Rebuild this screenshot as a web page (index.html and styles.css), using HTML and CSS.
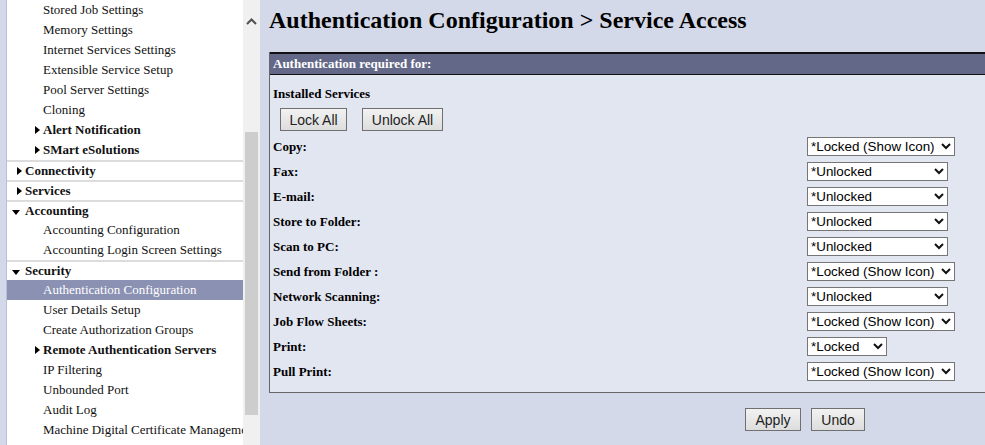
FILE: index.html
```html
<!DOCTYPE html>
<html lang="en">
<head>
    <meta charset="UTF-8">
    <title>Authentication Configuration - Service Access</title>
    <link rel="stylesheet" href="styles.css">
</head>
<body>
    <div class="layout">
        <!-- Left navigation tree -->
        <div class="nav">
            <ul class="tree">
                <li class="leaf">Stored Job Settings</li>
                <li class="leaf">Memory Settings</li>
                <li class="leaf">Internet Services Settings</li>
                <li class="leaf">Extensible Service Setup</li>
                <li class="leaf">Pool Server Settings</li>
                <li class="leaf">Cloning</li>
                <li class="sub closed">Alert Notification</li>
                <li class="sub closed">SMart eSolutions</li>
                <li class="group closed">Connectivity</li>
                <li class="group closed">Services</li>
                <li class="group open">Accounting</li>
                <li class="leaf">Accounting Configuration</li>
                <li class="leaf">Accounting Login Screen Settings</li>
                <li class="group open">Security</li>
                <li class="leaf selected">Authentication Configuration</li>
                <li class="leaf">User Details Setup</li>
                <li class="leaf">Create Authorization Groups</li>
                <li class="sub closed">Remote Authentication Servers</li>
                <li class="leaf">IP Filtering</li>
                <li class="leaf">Unbounded Port</li>
                <li class="leaf">Audit Log</li>
                <li class="leaf">Machine Digital Certificate Management</li>
            </ul>
            <div class="scrollbar">
                <div class="scroll-up">
                    <svg width="11" height="7" viewBox="0 0 11 7"><path d="M1 6 L5.5 1.5 L10 6" fill="none" stroke="#505050" stroke-width="2"/></svg>
                </div>
                <div class="scroll-thumb"></div>
            </div>
        </div>

        <!-- Main content -->
        <div class="main">
            <h1>Authentication Configuration &gt; Service Access</h1>
            <div class="panel">
                <div class="panel-header">Authentication required for:</div>
                <div class="panel-body">
                    <p class="section-title">Installed Services</p>
                    <div class="lock-buttons">
                        <button class="btn btn-lock">Lock All</button>
                        <button class="btn btn-unlock">Unlock All</button>
                    </div>
                    <div class="service-grid" id="serviceGrid"></div>
                </div>
            </div>
            <div class="form-actions">
                <button class="btn btn-apply">Apply</button>
                <button class="btn btn-undo">Undo</button>
            </div>
        </div>
    </div>

    <script>
        // Services and their current lock state
        const services = [
            { name: 'Copy:', value: '*Locked (Show Icon)', size: 'wide' },
            { name: 'Fax:', value: '*Unlocked', size: 'mid' },
            { name: 'E-mail:', value: '*Unlocked', size: 'mid' },
            { name: 'Store to Folder:', value: '*Unlocked', size: 'mid' },
            { name: 'Scan to PC:', value: '*Unlocked', size: 'mid' },
            { name: 'Send from Folder :', value: '*Locked (Show Icon)', size: 'wide' },
            { name: 'Network Scanning:', value: '*Unlocked', size: 'mid' },
            { name: 'Job Flow Sheets:', value: '*Locked (Show Icon)', size: 'wide' },
            { name: 'Print:', value: '*Locked', size: 'narrow' },
            { name: 'Pull Print:', value: '*Locked (Show Icon)', size: 'wide' }
        ];

        const chevron = '<svg class="chevron" width="10" height="7" viewBox="0 0 10 7"><path d="M1 1 L5 5 L9 1" fill="none" stroke="#111" stroke-width="2"/></svg>';

        const grid = document.getElementById('serviceGrid');
        grid.innerHTML = services.map(s => `
            <div class="service-label">${s.name}</div>
            <div class="service-value">
                <span class="select-wrap sel-${s.size}">
                    <select class="state-select">
                        <option>${s.value}</option>
                    </select>
                    ${chevron}
                </span>
            </div>
        `).join('');
    </script>
</body>
</html>
```

FILE: styles.css
```css
body {
    margin: 0;
    font-family: "Liberation Serif", "Times New Roman", serif;
    background-color: #d3d9e8;
    overflow: hidden;
}

.layout {
    display: flex;
    height: 445px;
    overflow: hidden;
}

/* Navigation */
.nav {
    display: flex;
    width: 254px;
    flex-shrink: 0;
    margin-left: 6px;
    border-left: 1px solid #b9c0d6;
}

.tree {
    list-style: none;
    margin: 0;
    padding: 0;
    width: 236px;
    background-color: #fff;
    overflow: hidden;
    white-space: nowrap;
}

.tree li {
    font-size: 13px;
    height: 20px;
    line-height: 20px;
    color: #111;
}

.tree .leaf {
    padding-left: 36px;
}

.tree .sub {
    padding-left: 36px;
    font-weight: bold;
    position: relative;
}

.tree .group {
    padding-left: 18px;
    font-weight: bold;
    height: 18px;
    line-height: 18px;
    border-top: 2px solid #dcdcdc;
    position: relative;
}

.tree .closed::before,
.tree .open::before {
    content: "";
    position: absolute;
    width: 0;
    height: 0;
}

.tree .closed::before {
    top: 5px;
    border-top: 4px solid transparent;
    border-bottom: 4px solid transparent;
    border-left: 5px solid #000;
}

.tree .sub.closed::before {
    left: 28px;
    top: 6px;
}

.tree .group.closed::before {
    left: 10px;
}

.tree .group.open::before {
    left: 5px;
    top: 8px;
    border-left: 4px solid transparent;
    border-right: 4px solid transparent;
    border-top: 5px solid #000;
}

.tree .selected {
    background-color: #8b91b3;
    color: #fff;
}

.scrollbar {
    width: 17px;
    background-color: #f0f0f0;
    position: relative;
}

.scroll-up {
    height: 25px;
    display: flex;
    align-items: flex-end;
    justify-content: center;
}

.scroll-thumb {
    position: absolute;
    left: 2px;
    right: 2px;
    top: 132px;
    height: 283px;
    background-color: #cdcdcd;
}

/* Main area */
.main {
    flex: 1;
    padding: 6px 0 0 8px;
    overflow: hidden;
}

.main h1 {
    margin: 0;
    font-size: 24px;
    line-height: 28px;
    height: 46px;
    white-space: nowrap;
    color: #000;
}

.panel {
    width: 1100px;
    border-left: 1px solid #666;
    border-bottom: 1px solid #666;
    background-color: #e2e6f1;
}

.panel-header {
    background-color: #636888;
    border-top: 2px solid #111;
    border-bottom: 1px solid #111;
    color: #fff;
    font-size: 13px;
    font-weight: bold;
    height: 20px;
    line-height: 20px;
    padding-left: 3px;
}

.panel-body {
    padding: 9px 0 5px 3px;
}

.section-title {
    margin: 0;
    font-size: 13px;
    font-weight: bold;
    line-height: 20px;
}

.lock-buttons {
    display: flex;
    gap: 15px;
    padding: 4px 0 0 7px;
    height: 29px;
}

.btn {
    font-family: Arial, "Liberation Sans", sans-serif;
    font-size: 14px;
    color: #222;
    height: 23px;
    padding: 0;
    border: 1px solid #707070;
    border-radius: 0;
    background: linear-gradient(#f2f2f2, #dddddd);
    cursor: pointer;
}

.btn-lock {
    width: 67px;
}

.btn-unlock {
    width: 81px;
}

.service-grid {
    display: grid;
    grid-template-columns: 534px auto;
    grid-auto-rows: 25px;
}

.service-label {
    font-size: 13px;
    font-weight: bold;
    line-height: 20px;
}

.select-wrap {
    position: relative;
    display: inline-block;
    height: 19px;
}

.state-select {
    appearance: none;
    -webkit-appearance: none;
    width: 100%;
    font-family: Arial, "Liberation Sans", sans-serif;
    font-size: 13.4px;
    height: 19px;
    padding: 0 0 0 3px;
    border: 1px solid #767676;
    border-radius: 0;
    background-color: #fff;
    color: #000;
}

.chevron {
    position: absolute;
    right: 4px;
    top: 6px;
    pointer-events: none;
}

.sel-wide {
    width: 148px;
}

.sel-mid {
    width: 141px;
}

.sel-narrow {
    width: 80px;
}

.form-actions {
    display: flex;
    gap: 10px;
    padding: 15px 0 0 476px;
}

.btn-apply {
    width: 56px;
}

.btn-undo {
    width: 54px;
}
```
